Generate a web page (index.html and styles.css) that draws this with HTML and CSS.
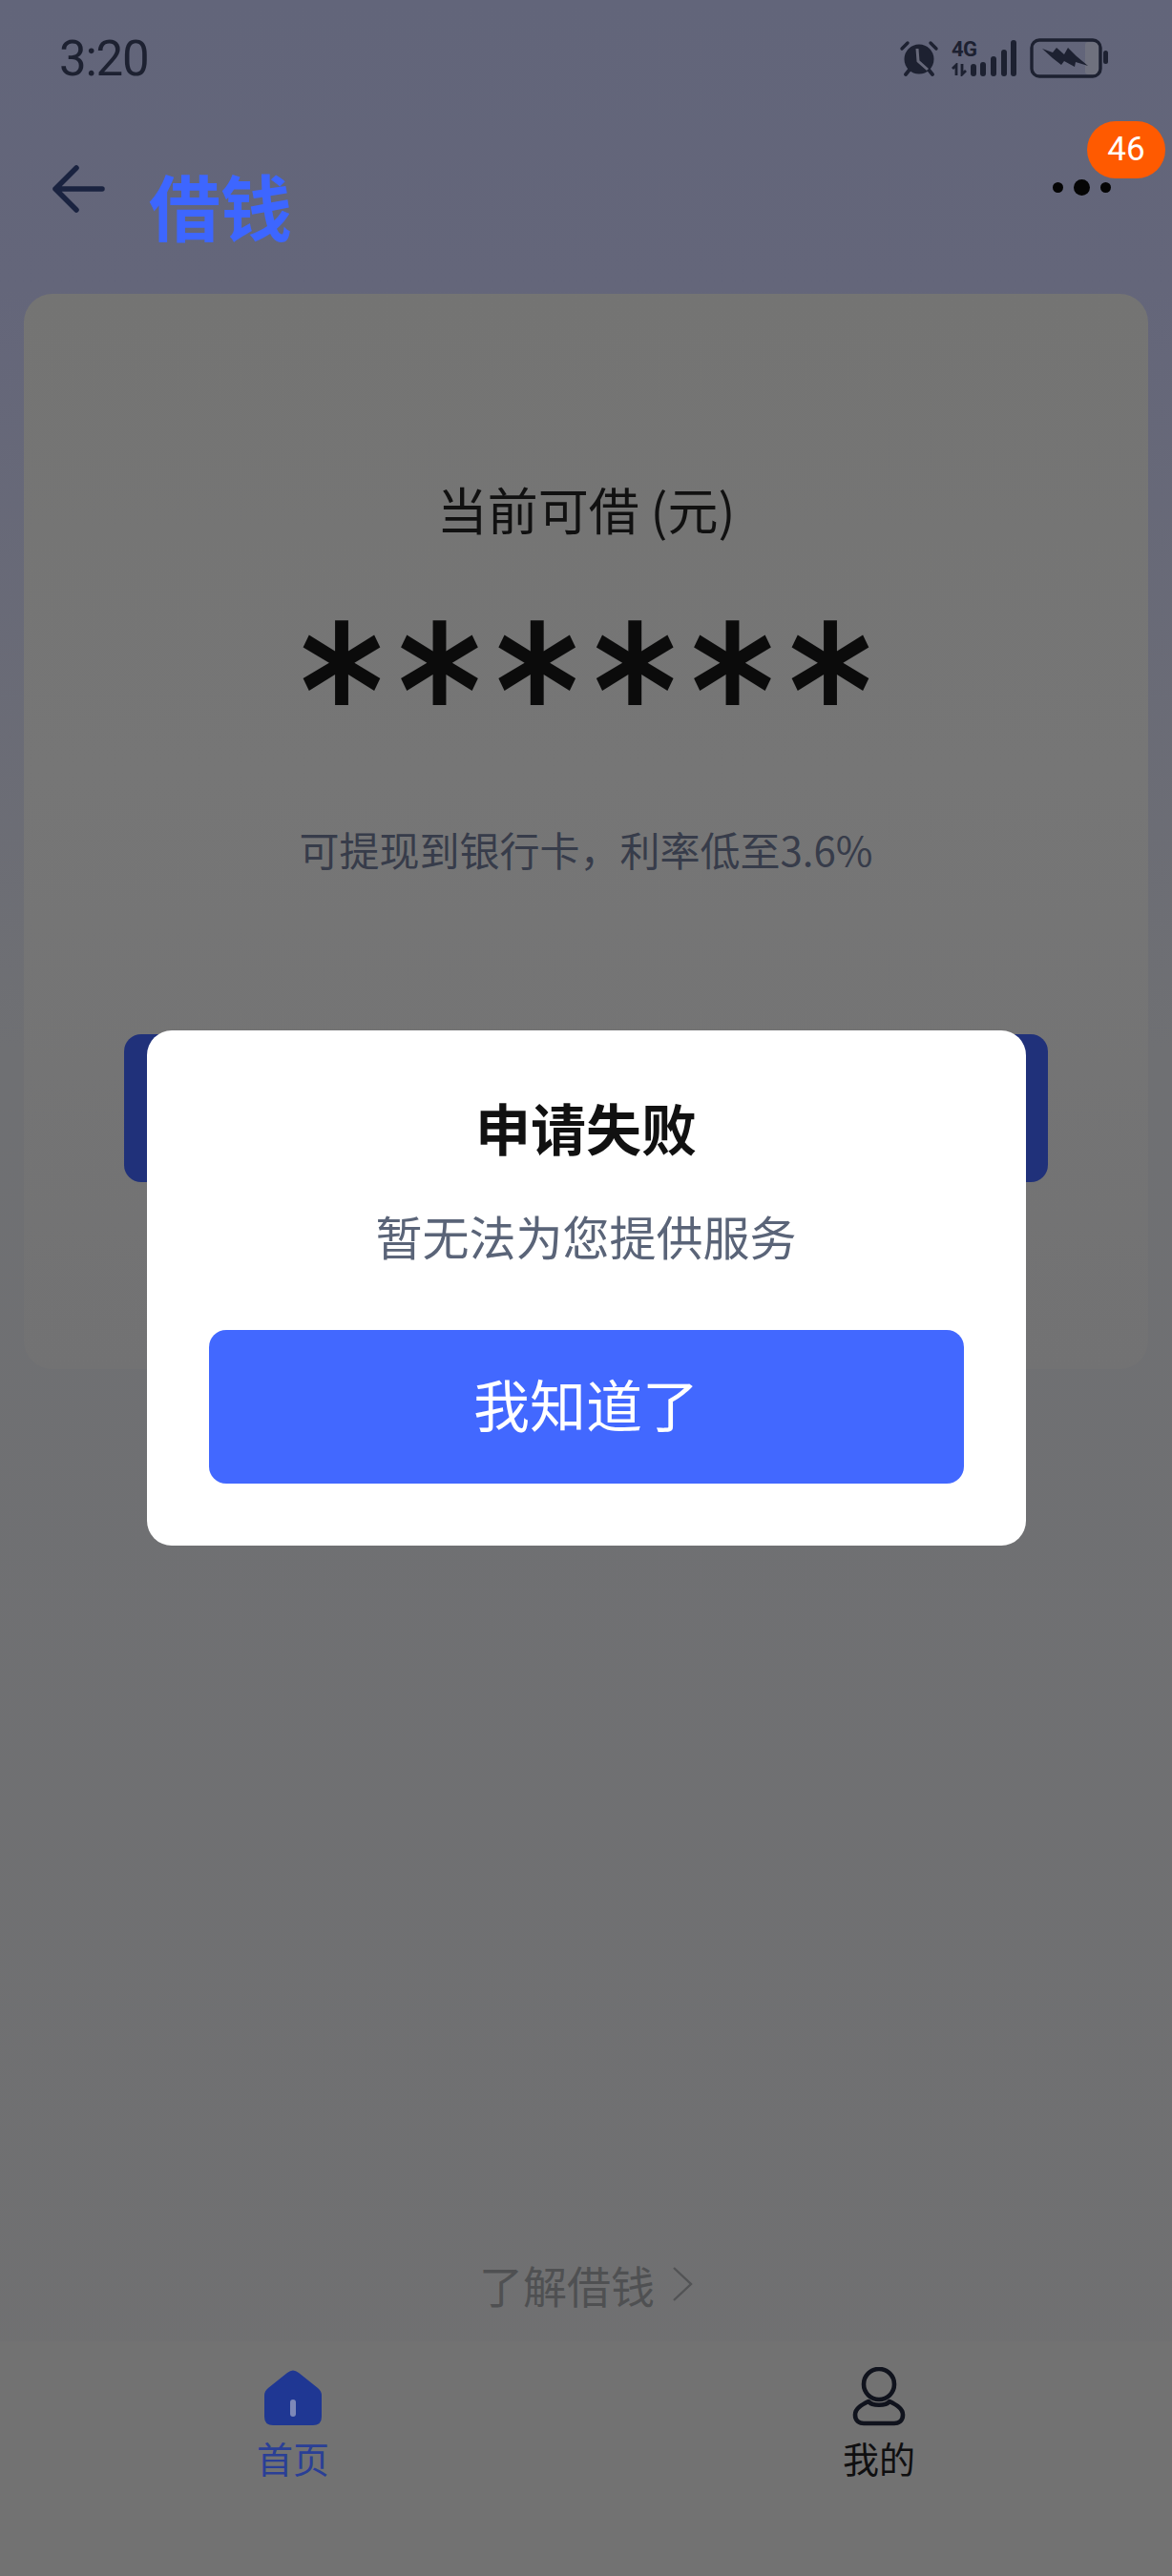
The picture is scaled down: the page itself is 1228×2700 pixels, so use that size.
FILE: index.html
```html
<!DOCTYPE html>
<html lang="zh-CN">
<head>
  <meta charset="UTF-8" />
  <title>借钱</title>
  <link rel="stylesheet" href="styles.css">
</head>
<body>
  <div class="page">

    <!-- 状态栏 -->
    <div class="status">
      <span class="time">3:20</span>
      <div class="status-icons">
        <svg class="alarm" width="42" height="38" viewBox="0 0 42 38">
          <path d="M3 9 L9 3 M33 3 L39 9" stroke="#1d2131" stroke-width="3.4" stroke-linecap="round" fill="none"/>
          <path d="M7 36 L11 31 M35 36 L31 31" stroke="#1d2131" stroke-width="3.8" stroke-linecap="round" fill="none"/>
          <circle cx="21" cy="20" r="15.5" fill="#1d2131"/>
          <path d="M19 9 L20 22 L30 31" stroke="#666879" stroke-width="3" fill="none"/>
        </svg>
        <div class="net">
          <span class="net-type">4G</span>
          <svg class="net-arrows" width="17" height="14" viewBox="0 0 17 14">
            <path d="M5 13 V2 L1 6 M11 1 V12 L15 8" stroke="#1d2131" stroke-width="2.8" fill="none"/>
          </svg>
        </div>
        <svg class="signal" width="48" height="38" viewBox="0 0 48 38">
          <rect x="0" y="25" width="6" height="13" rx="3" fill="#1d2131"/>
          <rect x="10" y="23" width="6" height="15" rx="3" fill="#1d2131"/>
          <rect x="21" y="17" width="6" height="21" rx="3" fill="#1d2131"/>
          <rect x="32" y="10" width="6" height="28" rx="3" fill="#1d2131"/>
          <rect x="42" y="0" width="6" height="38" rx="3" fill="#1d2131"/>
        </svg>
        <svg class="battery" width="82" height="42" viewBox="0 0 82 42">
          <rect x="58" y="4" width="14" height="34" rx="3" fill="#6f717e"/>
          <rect x="2" y="2" width="72" height="38" rx="8" stroke="#1d2131" stroke-width="3.4" fill="none"/>
          <path d="M13 11 L24 15 L28 10 L36 17 L40 10 L49 19 L61 29 L48 25 L47 30 L36 24 L33 28 L24 21 Z" fill="#1d2131"/>
          <rect x="77" y="13" width="5" height="14" rx="2.5" fill="#1d2131"/>
        </svg>
      </div>
    </div>

    <!-- 标题栏 -->
    <div class="header">
      <svg class="back" width="56" height="50" viewBox="0 0 56 50">
        <path d="M53 25 H4 M26 3 L4 25 L26 47" stroke="#1a2340" stroke-width="5.5" stroke-linecap="round" stroke-linejoin="round" fill="none"/>
      </svg>
      <h1 class="title">借钱</h1>
      <div class="more">
        <span class="dot"></span>
        <span class="dot dot-big"></span>
        <span class="dot"></span>
      </div>
      <span class="badge">46</span>
    </div>

    <!-- 额度卡片 -->
    <div class="card">
      <div class="card-label">当前可借 (元)</div>
      <div class="card-amount">******</div>
      <div class="card-hint">可提现到银行卡，利率低至3.6%</div>
      <div class="card-btn"></div>
    </div>

    <div class="learn">
      <span>了解借钱</span>
      <svg width="22" height="38" viewBox="0 0 22 38">
        <path d="M2 2 L20 19 L2 36" stroke="#525355" stroke-width="2.4" fill="none"/>
      </svg>
    </div>

    <!-- 底部导航 -->
    <div class="tabs">
      <div class="tab tab-active">
        <svg width="60" height="62" viewBox="0 0 60 62">
          <path d="M24 6 Q30 1 36 6 L56 22 Q60 25 60 30 V52 Q60 61 51 61 H9 Q0 61 0 52 V30 Q0 25 4 22 Z" fill="#1f3793"/>
          <rect x="27" y="34" width="6" height="18" rx="3" fill="#7d88b8"/>
        </svg>
        <span>首页</span>
      </div>
      <div class="tab">
        <svg width="56" height="62" viewBox="0 0 56 62">
          <ellipse cx="28" cy="18" rx="16" ry="16" stroke="#10131d" stroke-width="4.6" fill="none"/>
          <path d="M17 36 C11 39 3 43 3 50 C3 56 7 59 12 59 H44 C49 59 53 56 53 50 C53 43 45 39 39 36 C35 41 21 41 17 36 Z" stroke="#10131d" stroke-width="4.6" stroke-linejoin="round" fill="none"/>
        </svg>
        <span>我的</span>
      </div>
    </div>

    <!-- 弹窗 -->
    <div class="overlay">
      <div class="dialog">
        <h2 class="dialog-title">申请失败</h2>
        <p class="dialog-text">暂无法为您提供服务</p>
        <button class="dialog-btn">我知道了</button>
      </div>
    </div>

  </div>
</body>
</html>
```

FILE: styles.css
```css
* {
  box-sizing: border-box;
}

body {
  margin: 0;
  font-family: "Noto Sans CJK SC", "Noto Sans", sans-serif;
}

.page {
  position: relative;
  width: 1228px;
  height: 2700px;
  display: flex;
  flex-direction: column;
  overflow: hidden;
  background: linear-gradient(180deg, #62657a 0, #64667a 300px, #6f7073 1100px, #707071 100%);
}

/* 状态栏 */
.status {
  height: 122px;
  padding: 0 67px 0 62px;
  display: flex;
  align-items: center;
  justify-content: space-between;
}

.time {
  font-family: Roboto, sans-serif;
  font-size: 51px;
  letter-spacing: -1.2px;
  color: #1d2131;
}

.status-icons {
  display: flex;
  align-items: center;
}

.alarm {
  margin-right: 13px;
}

.net {
  display: flex;
  flex-direction: column;
  width: 20px;
  height: 38px;
}

.net-type {
  font-family: Roboto, sans-serif;
  font-size: 22px;
  font-weight: 700;
  line-height: 20px;
  letter-spacing: -0.5px;
  white-space: nowrap;
  color: #1d2131;
}

.net-arrows {
  margin-top: 4px;
}

.battery {
  margin-left: 14px;
}

/* 标题栏 */
.header {
  position: relative;
  height: 186px;
  padding: 0 64px 0 54px;
  display: flex;
  align-items: flex-start;
}

.back {
  margin-top: 51px;
}

.title {
  margin: 43px 0 0 46px;
  font-size: 75px;
  line-height: 100px;
  font-weight: 700;
  color: #3d66ff;
}

.more {
  margin: 63px 0 0 auto;
  display: flex;
  align-items: center;
  gap: 11px;
  height: 22px;
}

.dot {
  width: 11px;
  height: 11px;
  border-radius: 50%;
  background: #050505;
}

.dot-big {
  width: 17px;
  height: 17px;
}

.badge {
  position: absolute;
  top: 5px;
  right: 7px;
  width: 82px;
  height: 60px;
  border-radius: 30px;
  background: #ff5a00;
  color: #fff;
  font-family: Roboto, sans-serif;
  font-size: 35px;
  line-height: 60px;
  text-align: center;
}

/* 额度卡片 */
.card {
  margin: 0 25px;
  height: 1127px;
  padding: 195px 105px 0;
  border-radius: 30px;
  background: linear-gradient(180deg, #747473 0, #767676 500px, #727273 100%);
  text-align: center;
}

.card-label {
  font-size: 53px;
  line-height: 60px;
  color: #111;
}

.card-amount {
  margin-top: 69px;
  height: 190px;
  font-family: "DejaVu Sans", sans-serif;
  font-size: 190px;
  font-weight: 700;
  line-height: 190px;
  letter-spacing: 17px;
  text-indent: 17px;
  white-space: nowrap;
  transform: scaleX(0.88);
  color: #0b0b0b;
}

.card-hint {
  margin-top: 38px;
  font-size: 42px;
  line-height: 60px;
  color: #373c4a;
}

.card-btn {
  margin-top: 164px;
  height: 155px;
  border-radius: 18px;
  background: #20317a;
}

/* 了解借钱 */
.learn {
  margin-top: auto;
  margin-bottom: 30px;
  height: 60px;
  display: flex;
  align-items: center;
  justify-content: center;
  gap: 18px;
  font-size: 46px;
  color: #4f5052;
}

/* 底部导航 */
.tabs {
  height: 246px;
  padding-top: 27px;
  display: grid;
  grid-template-columns: 1fr 1fr;
  background: #727272;
}

.tab {
  display: flex;
  flex-direction: column;
  align-items: center;
  gap: 13px;
  font-size: 38px;
  line-height: 40px;
  color: #0f0f10;
}

.tab-active {
  color: #2a3f96;
}

/* 弹窗 */
.overlay {
  position: absolute;
  inset: 0;
  display: flex;
  align-items: center;
  justify-content: center;
}

.dialog {
  width: 921px;
  height: 540px;
  padding: 61px 65px 0;
  border-radius: 26px;
  background: #fff;
  text-align: center;
}

.dialog-title {
  margin: 0;
  font-size: 58px;
  line-height: 80px;
  font-weight: 700;
  color: #111;
}

.dialog-text {
  margin: 39px 0 0;
  font-size: 49px;
  line-height: 70px;
  color: #5a6478;
}

.dialog-btn {
  display: block;
  width: 100%;
  height: 161px;
  margin-top: 64px;
  padding: 0 0 8px;
  border: none;
  border-radius: 18px;
  background: #4268ff;
  color: #fff;
  font-family: inherit;
  font-size: 59px;
}
```
